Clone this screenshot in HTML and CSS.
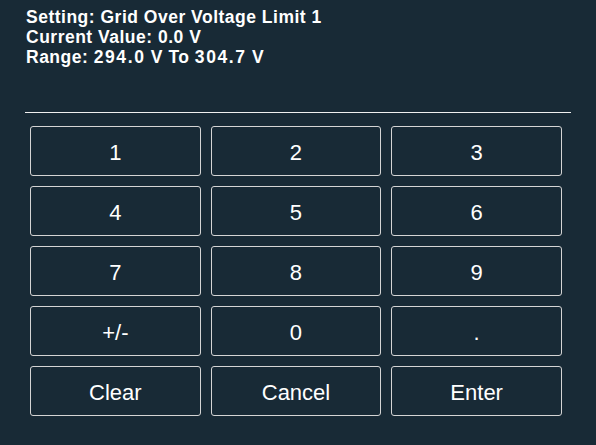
FILE: index.html
```html
<!DOCTYPE html>
<html>
<head>
<meta charset="utf-8">
<link rel="stylesheet" href="styles.css">
</head>
<body>
<div class="screen">
  <div class="info">
    <div class="info-line">Setting: Grid Over Voltage Limit 1</div>
    <div class="info-line">Current Value: 0.0 V</div>
    <div class="info-line">Range: <span class="num">294.0</span> V To <span class="num">304.7</span> V</div>
  </div>
  <div class="divider"></div>
  <div class="keypad">
    <button class="key">1</button>
    <button class="key">2</button>
    <button class="key">3</button>
    <button class="key">4</button>
    <button class="key">5</button>
    <button class="key">6</button>
    <button class="key">7</button>
    <button class="key">8</button>
    <button class="key">9</button>
    <button class="key">+/-</button>
    <button class="key">0</button>
    <button class="key">.</button>
    <button class="key">Clear</button>
    <button class="key">Cancel</button>
    <button class="key">Enter</button>
  </div>
</div>
</body>
</html>
```

FILE: styles.css
```css
html, body {
  margin: 0;
  padding: 0;
  background: #182a36;
}
.screen {
  width: 596px;
  height: 445px;
  background: #182a36;
  font-family: "Liberation Sans", Arial, sans-serif;
  color: #ffffff;
  padding-top: 7px;
  box-sizing: border-box;
}
.info {
  padding-left: 26px;
  height: 105px;
}
.info-line {
  font-weight: bold;
  font-size: 17.5px;
  line-height: 20px;
  letter-spacing: 0.5px;
}
.num {
  letter-spacing: 1.6px;
}
.divider {
  margin-left: 25px;
  width: 546px;
  height: 1px;
  background: #f0f0f0;
}
.keypad {
  margin-top: 13px;
  margin-left: 30px;
  width: 532px;
  display: grid;
  grid-template-columns: 1fr 1fr 1fr;
  grid-auto-rows: 50px;
  column-gap: 10px;
  row-gap: 10px;
}
.key {
  background: transparent;
  border: 1px solid #d4d4d4;
  border-radius: 3px;
  color: #ffffff;
  font-family: "Liberation Sans", Arial, sans-serif;
  font-size: 22px;
  padding: 4px 0 0 0;
  margin: 0;
}
```
